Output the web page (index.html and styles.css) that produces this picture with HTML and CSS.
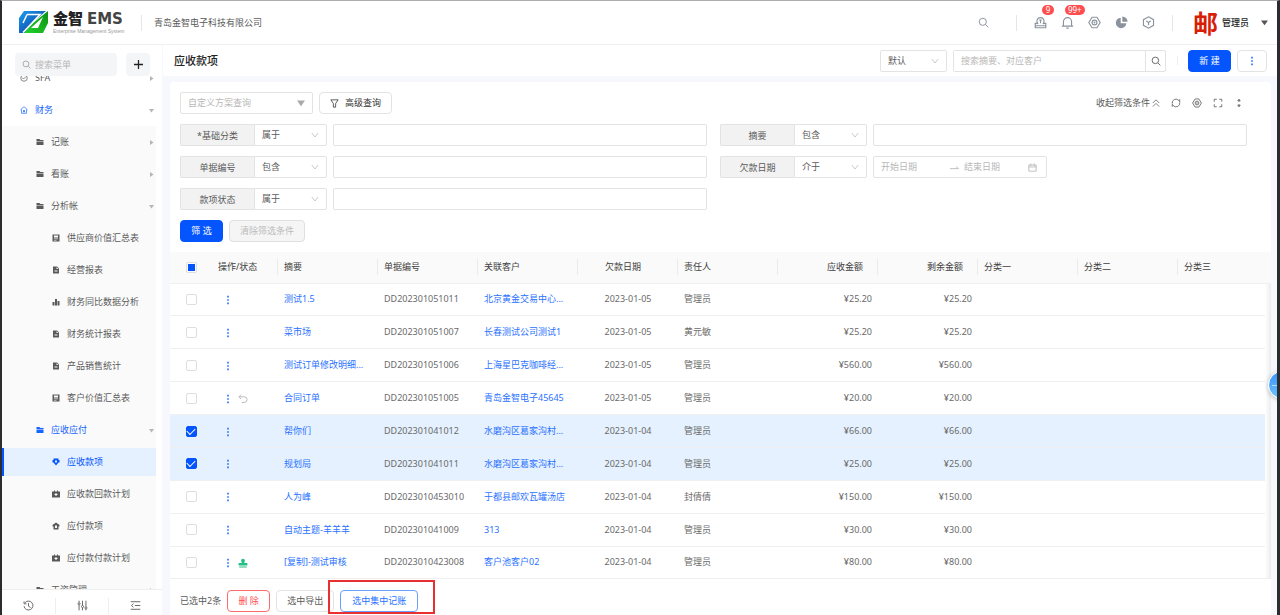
FILE: index.html
```html
<!DOCTYPE html>
<html lang="zh-CN">
<head>
    <meta charset="UTF-8">
    <meta name="viewport" content="width=device-width, initial-scale=1.0">
    <title>应收款项 - 金智 EMS</title>
    <link rel="stylesheet" href="styles.css">
</head>
<body>
    <!-- Shared icons -->
    <svg class="sprite" aria-hidden="true">
        <symbol id="search" viewBox="0 0 16 16"><circle cx="7" cy="7" r="5.2"/><path d="M11 11l4 4"/></symbol>
        <symbol id="chevron" viewBox="0 0 10 10"><path d="M1 2.5l4 5 4-5"/></symbol>
        <symbol id="caret" viewBox="0 0 10 10"><path d="M0 2h10L5 9z"/></symbol>
        <symbol id="caret-right" viewBox="0 0 10 10"><path d="M2 0v10l7-5z"/></symbol>
        <symbol id="dots" viewBox="0 0 4 12"><path d="M1 1h2v2H1zM1 5h2v2H1zM1 9h2v2H1z"/></symbol>
        <symbol id="folder" viewBox="0 0 16 16"><path d="M1 2h6l1.500 2H15v2H1zM1 7h14v7H1z"/></symbol>
        <symbol id="sheet" viewBox="0 0 16 16"><path fill-rule="evenodd" d="M1 1h14v14H1zM4 3v4h8V3zM4 9v1.500h8V9zM4 12v1h5v-1z"/></symbol>
        <symbol id="doc" viewBox="0 0 16 16"><path fill-rule="evenodd" d="M2 1h8l4 4v10H2zM9 2.500V6h4zM5 8v1.200h6V8zM5 11v1.200h6V11z"/></symbol>
        <symbol id="bars" viewBox="0 0 16 16"><path d="M1 8h4v7H1zM6 2h4v13H6zM11 6h4v9h-4z"/></symbol>
        <symbol id="receive" viewBox="0 0 16 16"><path fill-rule="evenodd" d="M3 1h10v3h2v5h-2l-5 6-5-6H1V4h2zM6 5v4h4V5z"/></symbol>
        <symbol id="pay" viewBox="0 0 16 16"><path fill-rule="evenodd" d="M8 1l7 5v3h-2v6H3V9H1V6zM6 7v5h4V7z"/></symbol>
        <symbol id="plan" viewBox="0 0 16 16"><path fill-rule="evenodd" d="M0 3h4V1h2v2h4V1h2v2h4v12H0zM7 6v2H5v2h2v2h2v-2h2V8H9V6z"/></symbol>
        <symbol id="gear" viewBox="0 0 16 16"><path d="M5 1.500h6L15 8l-4 6.500H5L1 8z"/><circle cx="8" cy="8" r="3"/><circle cx="8" cy="8" r=".5"/></symbol>
    </svg>

    <div class="window">
        <!-- Top bar -->
        <header class="topbar">
            <div class="brand">
                <svg class="brand-mark" viewBox="0 0 29 23">
                    <defs>
                        <linearGradient id="blue" x1="0" y1="0" x2="1" y2="1"><stop offset="0" stop-color="#1aa0f2"/><stop offset="1" stop-color="#0a2c94"/></linearGradient>
                        <linearGradient id="green" x1="1" y1="0" x2="0" y2="1"><stop offset="0" stop-color="#0a8f12"/><stop offset="1" stop-color="#25d42f"/></linearGradient>
                    </defs>
                    <path fill="url(#blue)" d="M5 0h22L13 12 6 22H0V7z"/>
                    <path fill="url(#green)" d="M29 0v12l-5 10H5l9-10z"/>
                    <path fill="none" stroke="#fff" stroke-width="1.5" d="M8 3.500h13L4 21.500M4 12l4-8.500"/>
                    <path fill="#fff" d="M24 6l-5 11h-7z"/>
                </svg>
                <div class="brand-text">
                    <div class="brand-name">金智 <span class="brand-latin">EMS</span></div>
                    <div class="brand-sub">Enterprise Management System</div>
                </div>
            </div>
            <span class="divider"></span>
            <span class="company">青岛金智电子科技有限公司</span>

            <div class="top-tools">
                <button class="icon-btn top-search" aria-label="搜索"><svg class="line"><use href="#search"/></svg></button>
                <span class="divider"></span>
                <div class="tool-icons">
                    <button class="icon-btn" aria-label="审批">
                        <svg class="line" viewBox="0 0 16 16"><path d="M5 10C2 6 4 2 8 2s6 4 3 8M4 9H1.500v5.500h13V9H12M1.500 12h13M6.500 5h3M8 5v4"/></svg>
                        <span class="badge">9</span>
                    </button>
                    <button class="icon-btn" aria-label="通知">
                        <svg class="line" viewBox="0 0 16 16"><path d="M3 12V7a5 5 0 0110 0v5M1 12.500h14M6.500 15h3"/></svg>
                        <span class="badge">99+</span>
                    </button>
                    <button class="icon-btn" aria-label="设置"><svg class="line"><use href="#gear"/></svg></button>
                    <button class="icon-btn" aria-label="统计">
                        <svg class="solid" viewBox="0 0 16 16"><path d="M7 2v7h7a6.500 6.500 0 11-7-7zM9 .5A6.500 6.500 0 0115.500 7H9z"/></svg>
                    </button>
                    <button class="icon-btn" aria-label="应用">
                        <svg class="line" viewBox="0 0 16 16"><path d="M8 1l6.200 3.500v7L8 15l-6.200-3.500v-7zM5 6l3 2 3-2M8 8v3.500"/></svg>
                    </button>
                </div>
                <span class="divider"></span>
                <button class="user">
                    <span class="avatar">邮</span>
                    <span>管理员</span>
                    <svg class="caret"><use href="#caret"/></svg>
                </button>
            </div>
        </header>

        <div class="layout">
            <!-- Side menu -->
            <aside class="sidebar">
                <div class="side-search">
                    <label class="side-field">
                        <svg class="line"><use href="#search"/></svg>
                        <input type="text" placeholder="搜索菜单" aria-label="搜索菜单">
                    </label>
                    <button class="side-add" aria-label="添加">
                        <svg viewBox="0 0 10 10"><path d="M5 0v10M0 5h10"/></svg>
                    </button>
                </div>
                <nav class="menu">
                    <a href="#" class="item">
                        <svg class="line" viewBox="0 0 16 16"><circle cx="8" cy="8" r="6.500"/><path d="M4 7l3 3 5-5"/></svg>
                        SFA<svg class="arrow"><use href="#caret-right"/></svg>
                    </a>
                    <a href="#" class="item open">
                        <svg class="line" viewBox="0 0 16 16"><path d="M1 7.500L8 1.500l7 6M3 7v7.500h10V7M6 8l2 2 2-2M8 10v3M6 11h4"/></svg>
                        财务<svg class="arrow"><use href="#caret"/></svg>
                    </a>
                    <div class="submenu">
                        <a href="#" class="item level2"><svg><use href="#folder"/></svg>记账<svg class="arrow"><use href="#caret-right"/></svg></a>
                        <a href="#" class="item level2"><svg><use href="#folder"/></svg>看账<svg class="arrow"><use href="#caret-right"/></svg></a>
                        <a href="#" class="item level2"><svg><use href="#folder"/></svg>分析帐<svg class="arrow"><use href="#caret"/></svg></a>
                        <a href="#" class="item level3"><svg><use href="#sheet"/></svg>供应商价值汇总表</a>
                        <a href="#" class="item level3"><svg><use href="#doc"/></svg>经营报表</a>
                        <a href="#" class="item level3"><svg><use href="#bars"/></svg>财务同比数据分析</a>
                        <a href="#" class="item level3"><svg><use href="#doc"/></svg>财务统计报表</a>
                        <a href="#" class="item level3"><svg><use href="#doc"/></svg>产品销售统计</a>
                        <a href="#" class="item level3"><svg><use href="#sheet"/></svg>客户价值汇总表</a>
                        <a href="#" class="item level2 open"><svg><use href="#folder"/></svg>应收应付<svg class="arrow"><use href="#caret"/></svg></a>
                        <a href="#" class="item level3 active"><svg><use href="#receive"/></svg>应收款项</a>
                        <a href="#" class="item level3"><svg><use href="#plan"/></svg>应收款回款计划</a>
                        <a href="#" class="item level3"><svg><use href="#pay"/></svg>应付款项</a>
                        <a href="#" class="item level3"><svg><use href="#plan"/></svg>应付款付款计划</a>
                        <a href="#" class="item level2"><svg><use href="#folder"/></svg>工资管理<svg class="arrow"><use href="#caret-right"/></svg></a>
                    </div>
                </nav>
                <div class="side-foot">
                    <button aria-label="历史"><svg viewBox="0 0 16 16"><path d="M2.500 4.500A6.500 6.500 0 111.500 9M1.500 2v3.500H5M8 4.500V9l3 2"/></svg></button>
                    <button aria-label="调节"><svg viewBox="0 0 16 16"><path d="M3 1v3M3 7v8M8 1v7M8 11v4M13 1v9M13 13v2"/><circle cx="3" cy="5.500" r="1.500"/><circle cx="8" cy="9.500" r="1.500"/><circle cx="13" cy="11.500" r="1.500"/></svg></button>
                    <button aria-label="收起菜单"><svg viewBox="0 0 16 16"><path d="M1 2.500h14M7 8h8M1 13.500h14M5 5.500L2 8l3 2.500"/></svg></button>
                </div>
            </aside>

            <main class="main">
                <div class="page-head">
                    <h1>应收款项</h1>
                    <div class="page-tools">
                        <div class="select scope">
                            <select aria-label="范围"><option>默认</option></select>
                            <svg><use href="#chevron"/></svg>
                        </div>
                        <div class="search-box">
                            <input type="text" placeholder="搜索摘要、对应客户" aria-label="搜索">
                            <button aria-label="搜索"><svg class="line"><use href="#search"/></svg></button>
                        </div>
                        <span class="divider short"></span>
                        <button class="btn primary">新 建</button>
                        <button class="btn more" aria-label="更多"><svg class="dots"><use href="#dots"/></svg></button>
                    </div>
                </div>

                <section class="card">
                    <!-- Filters -->
                    <div class="filters">
                        <div class="filter-bar">
                            <div class="select scheme">
                                <select aria-label="自定义方案查询"><option>自定义方案查询</option></select>
                                <svg class="caret"><use href="#caret"/></svg>
                            </div>
                            <button class="btn advanced">
                                <svg class="line" viewBox="0 0 16 16"><path d="M1.500 1.500h13L10 8v6.500H6V8z"/></svg>高级查询
                            </button>
                            <div class="view-tools">
                                <button class="collapse">收起筛选条件
                                    <svg viewBox="0 0 10 10"><path d="M1 5l4-4 4 4M1 9.500l4-4 4 4"/></svg>
                                </button>
                                <button aria-label="刷新"><svg viewBox="0 0 16 16"><path d="M2 9a6 6 0 0110.500-5L14 6M14 2v4M14 7a6 6 0 01-10.500 5L2 10M2 14v-4"/></svg></button>
                                <button aria-label="列设置"><svg><use href="#gear"/></svg></button>
                                <button aria-label="全屏"><svg viewBox="0 0 16 16"><path d="M2 6V2h4M10 2h4v4M14 10v4h-4M6 14H2v-4"/></svg></button>
                                <button aria-label="行高"><svg viewBox="0 0 16 16"><path d="M8 2v4M8 10v4M6 4.500L8 2l2 2.500zM6 11.500L8 14l2-2.500z"/></svg></button>
                            </div>
                        </div>

                        <div class="filter-grid">
                            <div class="field">
                                <label for="category">*基础分类</label>
                                <div class="select"><select aria-label="基础分类条件"><option>属于</option></select><svg><use href="#chevron"/></svg></div>
                                <input type="text" id="category">
                            </div>
                            <div class="field">
                                <label for="summary">摘要</label>
                                <div class="select"><select aria-label="摘要条件"><option>包含</option></select><svg><use href="#chevron"/></svg></div>
                                <input type="text" id="summary">
                            </div>
                            <div class="field">
                                <label for="number">单据编号</label>
                                <div class="select"><select aria-label="单据编号条件"><option>包含</option></select><svg><use href="#chevron"/></svg></div>
                                <input type="text" id="number">
                            </div>
                            <div class="field">
                                <label for="start">欠款日期</label>
                                <div class="select"><select aria-label="欠款日期条件"><option>介于</option></select><svg><use href="#chevron"/></svg></div>
                                <div class="range">
                                    <input type="text" id="start" placeholder="开始日期">
                                    <svg viewBox="0 0 16 16"><path d="M0 10h15l-4-4"/></svg>
                                    <input type="text" placeholder="结束日期" aria-label="结束日期">
                                    <svg viewBox="0 0 16 16"><path d="M1.500 3.500h13v11h-13zM1.500 7h13M5 1v4M11 1v4"/></svg>
                                </div>
                            </div>
                            <div class="field">
                                <label for="status">款项状态</label>
                                <div class="select"><select aria-label="款项状态条件"><option>属于</option></select><svg><use href="#chevron"/></svg></div>
                                <input type="text" id="status">
                            </div>
                        </div>

                        <div class="filter-actions">
                            <button class="btn primary">筛 选</button>
                            <button class="btn" disabled>清除筛选条件</button>
                        </div>
                    </div>

                    <!-- Receivables -->
                    <div class="table-wrap">
                        <table>
                            <colgroup>
                                <col class="w-check"><col class="w-ops"><col class="w-col"><col class="w-col"><col class="w-col"><col class="w-col">
                                <col class="w-col"><col class="w-col"><col class="w-col"><col class="w-col"><col class="w-col"><col><col class="w-gutter">
                            </colgroup>
                            <thead>
                                <tr>
                                    <th class="check"><input type="checkbox" class="partial" aria-label="全选"></th>
                                    <th>操作/状态</th>
                                    <th>摘要</th>
                                    <th>单据编号</th>
                                    <th>关联客户</th>
                                    <th class="date">欠款日期</th>
                                    <th>责任人</th>
                                    <th class="money">应收金额</th>
                                    <th class="money">剩余金额</th>
                                    <th>分类一</th>
                                    <th>分类二</th>
                                    <th>分类三</th>
                                    <th></th>
                                </tr>
                            </thead>
                            <tbody>
                                <tr>
                                    <td class="check"><input type="checkbox" aria-label="选择"></td>
                                    <td class="ops"><button aria-label="操作"><svg class="dots"><use href="#dots"/></svg></button></td>
                                    <td><a href="#">测试1.5</a></td><td>DD202301051011</td><td><a href="#">北京黄金交易中心...</a></td>
                                    <td class="date">2023-01-05</td><td>管理员</td><td class="money">¥25.20</td><td class="money">¥25.20</td>
                                    <td></td><td></td><td></td><td class="gutter"></td>
                                </tr>
                                <tr>
                                    <td class="check"><input type="checkbox" aria-label="选择"></td>
                                    <td class="ops"><button aria-label="操作"><svg class="dots"><use href="#dots"/></svg></button></td>
                                    <td><a href="#">菜市场</a></td><td>DD202301051007</td><td><a href="#">长春测试公司测试1</a></td>
                                    <td class="date">2023-01-05</td><td>黄元敏</td><td class="money">¥25.20</td><td class="money">¥25.20</td>
                                    <td></td><td></td><td></td><td class="gutter"></td>
                                </tr>
                                <tr>
                                    <td class="check"><input type="checkbox" aria-label="选择"></td>
                                    <td class="ops"><button aria-label="操作"><svg class="dots"><use href="#dots"/></svg></button></td>
                                    <td><a href="#">测试订单修改明细...</a></td><td>DD202301051006</td><td><a href="#">上海星巴克咖啡经...</a></td>
                                    <td class="date">2023-01-05</td><td>管理员</td><td class="money">¥560.00</td><td class="money">¥560.00</td>
                                    <td></td><td></td><td></td><td class="gutter"></td>
                                </tr>
                                <tr>
                                    <td class="check"><input type="checkbox" aria-label="选择"></td>
                                    <td class="ops">
                                        <button aria-label="操作"><svg class="dots"><use href="#dots"/></svg></button>
                                        <svg class="state undo" viewBox="0 0 16 16"><path d="M5 1L1.500 4.500 5 8M1.500 4.500H10a4.500 4.500 0 010 9H6"/></svg>
                                    </td>
                                    <td><a href="#">合同订单</a></td><td>DD202301051005</td><td><a href="#">青岛金智电子45645</a></td>
                                    <td class="date">2023-01-05</td><td>管理员</td><td class="money">¥20.00</td><td class="money">¥20.00</td>
                                    <td></td><td></td><td></td><td class="gutter"></td>
                                </tr>
                                <tr class="selected">
                                    <td class="check"><input type="checkbox" aria-label="选择" checked></td>
                                    <td class="ops"><button aria-label="操作"><svg class="dots"><use href="#dots"/></svg></button></td>
                                    <td><a href="#">帮你们</a></td><td>DD202301041012</td><td><a href="#">水磨沟区葛家沟村...</a></td>
                                    <td class="date">2023-01-04</td><td>管理员</td><td class="money">¥66.00</td><td class="money">¥66.00</td>
                                    <td></td><td></td><td></td><td class="gutter"></td>
                                </tr>
                                <tr class="selected">
                                    <td class="check"><input type="checkbox" aria-label="选择" checked></td>
                                    <td class="ops"><button aria-label="操作"><svg class="dots"><use href="#dots"/></svg></button></td>
                                    <td><a href="#">规划局</a></td><td>DD202301041011</td><td><a href="#">水磨沟区葛家沟村...</a></td>
                                    <td class="date">2023-01-04</td><td>管理员</td><td class="money">¥25.00</td><td class="money">¥25.00</td>
                                    <td></td><td></td><td></td><td class="gutter"></td>
                                </tr>
                                <tr>
                                    <td class="check"><input type="checkbox" aria-label="选择"></td>
                                    <td class="ops"><button aria-label="操作"><svg class="dots"><use href="#dots"/></svg></button></td>
                                    <td><a href="#">人为峰</a></td><td>DD2023010453010</td><td><a href="#">于都县邮欢瓦罐汤店</a></td>
                                    <td class="date">2023-01-04</td><td>封倩倩</td><td class="money">¥150.00</td><td class="money">¥150.00</td>
                                    <td></td><td></td><td></td><td class="gutter"></td>
                                </tr>
                                <tr>
                                    <td class="check"><input type="checkbox" aria-label="选择"></td>
                                    <td class="ops"><button aria-label="操作"><svg class="dots"><use href="#dots"/></svg></button></td>
                                    <td><a href="#">自动主题-羊羊羊</a></td><td>DD202301041009</td><td><a href="#">313</a></td>
                                    <td class="date">2023-01-04</td><td>管理员</td><td class="money">¥30.00</td><td class="money">¥30.00</td>
                                    <td></td><td></td><td></td><td class="gutter"></td>
                                </tr>
                                <tr>
                                    <td class="check"><input type="checkbox" aria-label="选择"></td>
                                    <td class="ops">
                                        <button aria-label="操作"><svg class="dots"><use href="#dots"/></svg></button>
                                        <svg class="state stamp" viewBox="0 0 16 16"><path d="M5 4a3 3 0 016 0c0 2-1 2-1 4h5v4H1V8h5c0-2-1-2-1-4zM2 13.500h12V15H2z"/></svg>
                                    </td>
                                    <td><a href="#">[复制]-测试审核</a></td><td>DD2023010423008</td><td><a href="#">客户池客户02</a></td>
                                    <td class="date">2023-01-04</td><td>管理员</td><td class="money">¥80.00</td><td class="money">¥80.00</td>
                                    <td></td><td></td><td></td><td class="gutter"></td>
                                </tr>
                            </tbody>
                        </table>
                    </div>

                    <!-- Batch actions -->
                    <footer class="batch">
                        <span>已选中2条</span>
                        <button class="btn danger">删 除</button>
                        <button class="btn">选中导出</button>
                        <div class="callout"><button class="btn outline">选中集中记账</button></div>
                    </footer>
                </section>
            </main>
        </div>
        <button class="helper" aria-label="助手"></button>
    </div>
</body>
</html>
```

FILE: styles.css
```css
* {
    box-sizing: border-box;
}

body {
    margin: 0;
    font-family: "Noto Sans", "Noto Sans CJK SC", sans-serif;
    font-size: 9px;
    line-height: 14px;
    color: #5a5a5a;
}

button, input, select {
    font: inherit;
    color: inherit;
    margin: 0;
}

button {
    padding: 0;
    border: none;
    background: none;
    cursor: pointer;
}

a {
    color: #2a72ff;
    text-decoration: none;
}

svg {
    display: block;
    flex: none;
}

input::placeholder {
    color: #b8b8b8;
    opacity: 1;
}

.sprite {
    display: none;
}

.line {
    fill: none;
    stroke: currentColor;
    stroke-width: 1.4;
}

.solid {
    fill: currentColor;
}

.caret {
    width: 7px;
    height: 7px;
    fill: #555;
}

.dots {
    width: 4px;
    height: 10px;
    fill: #2a72ff;
}

.window {
    position: relative;
    display: flex;
    flex-direction: column;
    height: 100vh;
    overflow: hidden;
    border: solid #2b2c30;
    border-width: 1px 3px 0 2px;
    border-top-color: #adadb0;
    background: #f6f8fd;
}

.divider {
    width: 1px;
    height: 16px;
    background: #e6e6e8;
}

.divider.short {
    height: 9px;
    margin: 0 4px 0 5px;
    background: #eee;
}

/* Top bar */
.topbar {
    display: flex;
    align-items: center;
    height: 44px;
    flex: none;
    padding: 0 9px 0 17px;
    border-bottom: 1px solid #f0f0f0;
    background: #fff;
}

.brand {
    display: flex;
    align-items: center;
    gap: 5px;
    width: 122px;
}

.brand-mark {
    width: 29px;
    height: 23px;
}

.brand-name {
    font-size: 15px;
    line-height: 17px;
    font-weight: 900;
    color: #222;
    white-space: nowrap;
}

.brand-latin {
    font-family: "DejaVu Sans", Verdana, sans-serif;
    font-weight: 700;
    color: #444;
}

.brand-sub {
    font-family: "Liberation Sans", Arial, sans-serif;
    font-size: 5px;
    line-height: 7px;
    color: #999;
    white-space: nowrap;
}

.company {
    margin-left: 12px;
}

.top-tools {
    display: flex;
    align-items: center;
    margin-left: auto;
    color: #8c939d;
}

.icon-btn {
    position: relative;
}

.icon-btn svg {
    width: 13px;
    height: 13px;
}

.top-search {
    margin-right: 27px;
}

.top-search svg {
    width: 11px;
    height: 11px;
}

.tool-icons {
    display: flex;
    gap: 14px;
    margin: 0 17px;
}

.badge {
    position: absolute;
    left: 8px;
    top: -11px;
    min-width: 12px;
    height: 10px;
    padding: 0 3px;
    border-radius: 5px;
    background: #ff4d4f;
    color: #fff;
    font-size: 8px;
    line-height: 10px;
}

.tool-icons .icon-btn:nth-child(2) .badge {
    left: 4px;
}

.user {
    display: flex;
    align-items: center;
    gap: 4px;
    margin-left: 20px;
    color: #222;
    font-weight: 500;
}

.avatar {
    font-size: 25px;
    line-height: 26px;
    font-weight: 700;
    color: #d81e06;
}

.user .caret {
    margin-left: 8px;
}

.layout {
    display: flex;
    flex: 1;
    min-height: 0;
}

/* Side menu */
.sidebar {
    display: flex;
    flex-direction: column;
    width: 160px;
    flex: none;
    background: #fff;
}

.side-search {
    display: flex;
    justify-content: space-between;
    height: 31px;
    flex: none;
    padding: 8px 12px 0 13px;
}

.side-field {
    display: flex;
    align-items: center;
    gap: 4px;
    width: 102px;
    padding: 0 7px;
    border-radius: 4px;
    background: #f4f5f7;
    color: #999;
}

.side-field svg {
    width: 9px;
    height: 9px;
}

.side-field input {
    min-width: 0;
    flex: 1;
    padding: 0;
    border: none;
    background: none;
}

.side-add {
    display: grid;
    place-items: center;
    width: 24px;
    border-radius: 4px;
    background: #f4f5f7;
}

.side-add svg {
    width: 9px;
    height: 9px;
    stroke: #222;
    stroke-width: 1.4;
}

.menu {
    flex: 1;
    min-height: 0;
    overflow: hidden;
}

.menu > .item:first-child {
    margin-top: -12px;
}

.item {
    display: flex;
    align-items: center;
    gap: 7px;
    height: 28px;
    margin: 0 6px 4px 0;
    padding: 0 0 0 18px;
    color: #5a5a5a;
}

.item svg {
    width: 8px;
    height: 8px;
    fill: currentColor;
}

.item .line {
    fill: none;
}

.item .arrow {
    width: 5px;
    height: 5px;
    margin-left: auto;
    margin-right: 2px;
    fill: #b5b5b5;
}

.submenu {
    margin-right: 6px;
    margin-top: -2px;
    padding-top: 2px;
    background: #fafafa;
}

.submenu .item {
    margin-right: 0;
}

.level2 {
    padding-left: 34px;
}

.level3 {
    padding-left: 50px;
}

.item.open {
    color: #1765ff;
}

.item.active {
    border-left: 2px solid #0455fe;
    padding-left: 48px;
    background: #e5f1fe;
    color: #0455fe;
}

.side-foot {
    display: flex;
    align-items: center;
    height: 26px;
    flex: none;
    padding-top: 6px;
    border-top: 1px solid #eee;
}

.side-foot button {
    display: grid;
    place-items: center;
    flex: 1;
    height: 16px;
}

.side-foot button + button {
    border-left: 1px solid #eee;
}

.side-foot svg {
    width: 11px;
    height: 11px;
    fill: none;
    stroke: #666;
    stroke-width: 1.4;
}

/* Controls */
.btn {
    display: flex;
    align-items: center;
    justify-content: center;
    height: 22px;
    padding: 0 10px;
    border: 1px solid #e3e3e3;
    border-radius: 4px;
    background: #fff;
    white-space: nowrap;
}

.btn.primary {
    border-color: #0455fe;
    background: #0455fe;
    color: #fff;
    min-width: 43px;
}

.btn.danger {
    min-width: 43px;
    border-color: #ff6b6d;
    color: #ff4d4f;
}

.btn.outline {
    padding: 0 11px;
    border-color: #6a9eff;
    color: #2a72ff;
}

.btn:disabled {
    border-color: #e0e0e0;
    background: #f5f5f5;
    color: #bbb;
}

.select {
    display: grid;
    align-items: center;
    height: 22px;
    border: 1px solid #e3e3e3;
    border-radius: 2px;
    background: #fff;
}

.select select,
.select svg {
    grid-area: 1 / 1;
}

.select select {
    appearance: none;
    width: 100%;
    height: 20px;
    padding: 0 7px;
    border: none;
    background: none;
}

.select svg {
    justify-self: end;
    width: 8px;
    height: 8px;
    margin-right: 7px;
    fill: none;
    stroke: #bbb;
    pointer-events: none;
}

.select .caret {
    fill: #aaa;
    stroke: none;
}

/* Page header */
.main {
    display: flex;
    flex-direction: column;
    flex: 1;
    min-width: 0;
    margin-left: 1px;
}

.page-head {
    display: flex;
    align-items: center;
    justify-content: space-between;
    height: 31px;
    flex: none;
    padding: 0 10px 0 11px;
    background: #fff;
}

.page-head h1 {
    margin: 0;
    font-size: 11px;
    font-weight: 500;
    color: #222;
}

.page-tools {
    display: flex;
    align-items: center;
    gap: 6px;
}

.scope {
    width: 67px;
}

.search-box {
    display: flex;
    width: 213px;
    height: 22px;
    border: 1px solid #e3e3e3;
    border-radius: 2px;
}

.search-box input {
    flex: 1;
    min-width: 0;
    padding: 0 7px;
    border: none;
}

.search-box button {
    display: grid;
    place-items: center;
    width: 20px;
    border-left: 1px solid #e3e3e3;
}

.search-box svg {
    width: 10px;
    height: 10px;
}

.btn.more {
    width: 30px;
    padding: 0;
}

/* Card */
.card {
    display: flex;
    flex-direction: column;
    flex: 1;
    min-height: 0;
    margin: 6px 6px 0 7px;
    border-radius: 4px 4px 0 0;
    background: #fff;
}

.filters {
    display: flex;
    flex-direction: column;
    gap: 10px;
    padding: 10px 24px 10px 10px;
}

.filter-bar,
.filter-actions {
    display: flex;
    gap: 6px;
}

.scheme {
    width: 133px;
    color: #b8b8b8;
}

.advanced {
    gap: 6px;
    color: #333;
}

.advanced svg {
    width: 9px;
    height: 9px;
}

.view-tools {
    display: flex;
    align-items: center;
    gap: 11px;
    margin-left: auto;
    margin-right: 3px;
}

.view-tools svg {
    width: 10px;
    height: 10px;
    fill: none;
    stroke: #666;
    stroke-width: 1.4;
}

.collapse {
    display: flex;
    align-items: center;
    gap: 2px;
}

.collapse svg {
    width: 8px;
    height: 8px;
    stroke-width: 1;
}

.filter-grid {
    display: grid;
    grid-template-columns: 1fr 1fr;
    gap: 10px 13px;
}

.field {
    display: flex;
    height: 22px;
}

.field label {
    width: 74px;
    flex: none;
    border: 1px solid #e3e3e3;
    border-right: none;
    border-radius: 2px 0 0 2px;
    background: #f2f2f2;
    line-height: 21px;
    text-align: center;
}

.field .select {
    width: 73px;
    flex: none;
    margin-right: 6px;
    border-radius: 0 2px 2px 0;
}

.field > input {
    flex: 1;
    min-width: 0;
    border: 1px solid #e3e3e3;
    border-radius: 2px;
}

.range {
    display: flex;
    align-items: center;
    width: 174px;
    padding: 0 7px;
    border: 1px solid #e3e3e3;
    border-radius: 2px;
}

.range input {
    width: 69px;
    min-width: 0;
    padding: 0;
    border: none;
}

.range input + svg + input {
    padding-left: 5px;
}

.range svg {
    width: 9px;
    height: 9px;
    fill: none;
    stroke: #b0b0b0;
    stroke-width: 1.4;
}

/* Table */
.table-wrap {
    flex: 1;
    min-height: 0;
}

table {
    width: 100%;
    height: 100%;
    table-layout: fixed;
    border-collapse: collapse;
}

.w-check {
    width: 42px;
}

.w-ops {
    width: 66px;
}

.w-col {
    width: 100px;
}

.w-gutter {
    width: 6px;
}

th,
td {
    padding: 0 6px;
    border-bottom: 1px solid #f0f0f0;
    text-align: left;
    white-space: nowrap;
}

th {
    height: 31px;
    background: #fafafa linear-gradient(#ebebeb, #ebebeb) right center / 1px 16px no-repeat;
    color: #404040;
    font-weight: 400;
}

th.check,
th:nth-last-child(-n+2) {
    background-image: none;
}

td {
    color: #6a6a6a;
}

.check {
    padding: 0;
    text-align: center;
}

.date {
    text-align: center;
}

th.date {
    padding-right: 16px;
}

.money {
    text-align: right;
}

th.money {
    padding-right: 15px;
}

.selected td {
    background: #e5f1fe;
}

tbody tr:last-child td {
    border-bottom: none;
}

td.gutter,
.selected td.gutter {
    padding: 0;
    border: none;
    background: linear-gradient(90deg, #fff, #ececec);
}

.check input {
    appearance: none;
    display: grid;
    place-items: center;
    width: 11px;
    height: 11px;
    margin: 0 auto;
    border: 1px solid #dedede;
    border-radius: 2px;
    background: #fff;
}

.check input.partial::before {
    content: "";
    width: 7px;
    height: 7px;
    background: #0455fe;
}

.check input:checked {
    border-color: #0455fe;
    background: #0455fe;
}

.check input:checked::before {
    content: "";
    width: 7px;
    height: 4px;
    margin-bottom: 2px;
    border: solid #fff;
    border-width: 0 0 1px 1px;
    transform: rotate(-45deg);
}

.ops button,
.ops .state {
    display: inline-block;
    vertical-align: middle;
}

.ops {
    padding-left: 14px;
}

.state {
    width: 10px;
    height: 10px;
    margin-left: 6px;
}

.undo {
    fill: none;
    stroke: #bbb;
    stroke-width: 1.6;
}

.stamp {
    fill: #22c087;
}

/* Batch actions */
.batch {
    display: flex;
    align-items: center;
    gap: 6px;
    height: 37px;
    flex: none;
    padding: 8px 10px 0;
    border-top: 1px solid #eee;
}

.callout {
    position: relative;
}

.callout::after {
    content: "";
    position: absolute;
    inset: -10px -17px -2px -12px;
    border: 2px solid #e93030;
    pointer-events: none;
}

.helper {
    position: absolute;
    right: -19px;
    top: 370px;
    width: 28px;
    height: 28px;
    border: 1px solid #fff;
    border-radius: 50%;
    background: linear-gradient(90deg, #b9dcff, #b9dcff) 3px center / 8px 1px no-repeat, linear-gradient(#3a94fb, #6cc3fd);
    box-shadow: 0 1px 4px rgba(0, 0, 0, 0.25);
}
```
